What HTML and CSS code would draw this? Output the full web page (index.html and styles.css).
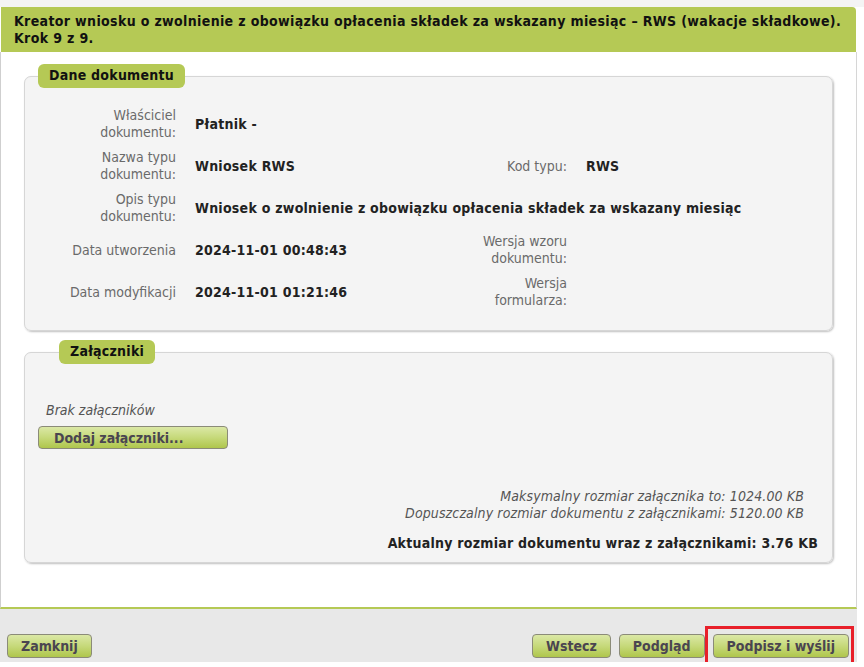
FILE: index.html
```html
<!DOCTYPE html>
<html lang="pl">
<head>
<meta charset="utf-8">
<title>Kreator wniosku RWS</title>
<link rel="stylesheet" href="styles.css">
</head>
<body>
<div class="topstrip"></div>
<div class="dialog">
  <div class="header">Kreator wniosku o zwolnienie z obowiązku opłacenia składek za wskazany miesiąc – RWS (wakacje składkowe).<br>Krok 9 z 9.</div>
  <div class="panel">
    <fieldset class="box">
      <legend class="pill">Dane dokumentu</legend>
      <div class="grid">
        <div class="lbl">Właściciel<br>dokumentu:</div>
        <div class="val">Płatnik -</div>
        <div class="lbl"></div>
        <div class="val"></div>

        <div class="lbl">Nazwa typu<br>dokumentu:</div>
        <div class="val">Wniosek RWS</div>
        <div class="lbl">Kod typu:</div>
        <div class="val">RWS</div>

        <div class="lbl">Opis typu<br>dokumentu:</div>
        <div class="val span3">Wniosek o zwolnienie z obowiązku opłacenia składek za wskazany miesiąc</div>

        <div class="lbl">Data utworzenia</div>
        <div class="val">2024-11-01 00:48:43</div>
        <div class="lbl">Wersja wzoru<br>dokumentu:</div>
        <div class="val"></div>

        <div class="lbl">Data modyfikacji</div>
        <div class="val">2024-11-01 01:21:46</div>
        <div class="lbl">Wersja<br>formularza:</div>
        <div class="val"></div>
      </div>
    </fieldset>

    <fieldset class="box box2">
      <legend class="pill">Załączniki</legend>
      <div class="none">Brak załączników</div>
      <button class="btn btn-add">Dodaj załączniki...</button>
      <div class="limits">
        <div>Maksymalny rozmiar załącznika to: 1024.00 KB</div>
        <div>Dopuszczalny rozmiar dokumentu z załącznikami: 5120.00 KB</div>
      </div>
      <div class="current">Aktualny rozmiar dokumentu wraz z załącznikami: 3.76 KB</div>
    </fieldset>
  </div>
  <div class="footer">
    <button class="btn">Zamknij</button>
    <div class="spacer"></div>
    <button class="btn">Wstecz</button>
    <button class="btn">Podgląd</button>
    <span class="highlight"><button class="btn">Podpisz i wyślij</button></span>
  </div>
</div>
</body>
</html>
```
FILE: styles.css
```css
html, body {
  margin: 0;
  padding: 0;
  background: #ffffff;
  font-family: Tahoma, "DejaVu Sans Condensed", "DejaVu Sans", sans-serif;
  font-size: 14px;
  color: #222;
}

.topstrip {
  height: 7px;
  background: #f4f4f4;
}

.dialog {
  width: 857px;
}

.header {
  margin-left: 1px;
  width: 842px;
  background: #b5c955;
  border-top-right-radius: 4px;
  padding: 6px 0 5px 13px;
  font-weight: bold;
  font-size: 14px;
  line-height: 17px;
  letter-spacing: 0.35px;
  color: #111;
  white-space: nowrap;
}

.panel {
  background: #fff;
  border-left: 1px solid #cfcfcf;
  border-right: 1px solid #d6d6d6;
  border-bottom: 2px solid #b5c955;
  padding: 12px 23px 44px 23px;
}

.box {
  margin: 0;
  padding: 0 0 17px 0;
  border: 1px solid #d6d6d6;
  border-radius: 7px;
  background: #f4f4f4;
  box-shadow: 1px 1px 2px rgba(0, 0, 0, 0.25);
  min-width: 0;
}

.pill {
  margin-left: 13px;
  padding: 3px 11px 4px 11px;
  background: #b5c955;
  border-radius: 6px;
  font-weight: bold;
  font-size: 14px;
  line-height: 17px;
  letter-spacing: 0.25px;
  color: #111;
}

.grid {
  display: grid;
  grid-template-columns: 151px 246px 107px 1fr;
  grid-auto-rows: 42px;
  column-gap: 19px;
  align-items: center;
  margin-top: 15px;
}

.lbl {
  text-align: right;
  color: #6a6a6a;
  line-height: 17px;
}

.val {
  font-weight: bold;
  color: #222;
  line-height: 17px;
  letter-spacing: 0.25px;
}

.span3 {
  grid-column: 2 / 5;
}

.box2 {
  margin-top: 9px;
  padding: 0 14px 10px 21px;
}

.none {
  margin-top: 38px;
  font-style: italic;
  color: #555;
  line-height: 17px;
}

.btn {
  font-family: inherit;
  font-weight: bold;
  font-size: 14px;
  color: #4a4550;
  height: 24px;
  padding: 0 13px;
  border: 1px solid #8b8b78;
  border-radius: 4px;
  background: linear-gradient(to bottom, #dbe8a6 0%, #c6d97a 50%, #afc64c 100%);
  cursor: pointer;
}

.btn-add {
  display: block;
  margin-top: 7px;
  margin-left: -8px;
  width: 190px;
  height: 23px;
  padding-left: 15px;
  text-align: left;
}

.limits {
  margin-top: 39px;
  margin-right: 14px;
  text-align: right;
  font-style: italic;
  font-size: 14px;
  line-height: 17px;
  letter-spacing: 0.12px;
  color: #555;
}

.current {
  margin-top: 13px;
  text-align: right;
  font-weight: bold;
  color: #222;
  line-height: 17px;
  letter-spacing: 0.25px;
}

.footer {
  display: flex;
  align-items: center;
  gap: 8px;
  background: #e8e8e8;
  padding: 25px 8px 4px 7px;
}

.spacer {
  flex: 1;
}

.highlight {
  position: relative;
  display: inline-block;
}

.highlight::after {
  content: "";
  position: absolute;
  left: -8px;
  top: -8px;
  right: -5px;
  bottom: -7px;
  border: 3px solid #e8202a;
  pointer-events: none;
}
```
